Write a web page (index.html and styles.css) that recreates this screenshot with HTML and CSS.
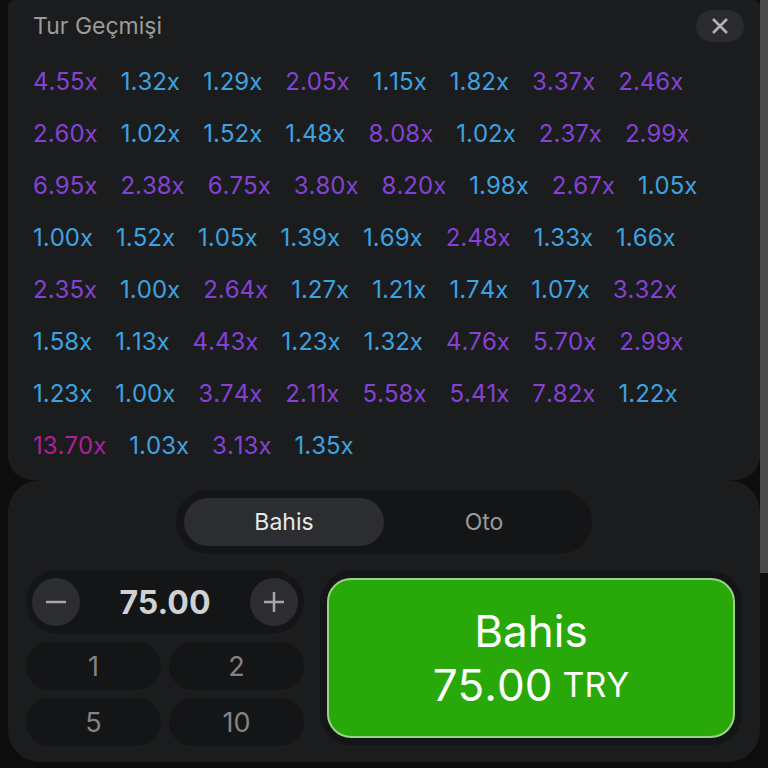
FILE: index.html
```
<!DOCTYPE html>
<html lang="tr">
<head>
    <meta charset="UTF-8">
    <meta name="viewport" content="width=device-width, initial-scale=1.0">
    <title>Tur Geçmişi</title>
    <link rel="stylesheet" href="styles.css">
</head>
<body>
    <main class="content">
        <section class="history">
            <header class="history-header">
                <h1>Tur Geçmişi</h1>
                <button class="close" type="button" aria-label="Kapat">
                    <svg width="18" height="18" viewBox="0 0 18 18"><path d="M2 2L16 16M16 2L2 16"/></svg>
                </button>
            </header>
            <ul class="rounds">
                <li class="mid">4.55x</li>
                <li>1.32x</li>
                <li>1.29x</li>
                <li class="mid">2.05x</li>
                <li>1.15x</li>
                <li>1.82x</li>
                <li class="mid">3.37x</li>
                <li class="mid">2.46x</li>
                <li class="mid">2.60x</li>
                <li>1.02x</li>
                <li>1.52x</li>
                <li>1.48x</li>
                <li class="mid">8.08x</li>
                <li>1.02x</li>
                <li class="mid">2.37x</li>
                <li class="mid">2.99x</li>
                <li class="mid">6.95x</li>
                <li class="mid">2.38x</li>
                <li class="mid">6.75x</li>
                <li class="mid">3.80x</li>
                <li class="mid">8.20x</li>
                <li>1.98x</li>
                <li class="mid">2.67x</li>
                <li>1.05x</li>
                <li>1.00x</li>
                <li>1.52x</li>
                <li>1.05x</li>
                <li>1.39x</li>
                <li>1.69x</li>
                <li class="mid">2.48x</li>
                <li>1.33x</li>
                <li>1.66x</li>
                <li class="mid">2.35x</li>
                <li>1.00x</li>
                <li class="mid">2.64x</li>
                <li>1.27x</li>
                <li>1.21x</li>
                <li>1.74x</li>
                <li>1.07x</li>
                <li class="mid">3.32x</li>
                <li>1.58x</li>
                <li>1.13x</li>
                <li class="mid">4.43x</li>
                <li>1.23x</li>
                <li>1.32x</li>
                <li class="mid">4.76x</li>
                <li class="mid">5.70x</li>
                <li class="mid">2.99x</li>
                <li>1.23x</li>
                <li>1.00x</li>
                <li class="mid">3.74x</li>
                <li class="mid">2.11x</li>
                <li class="mid">5.58x</li>
                <li class="mid">5.41x</li>
                <li class="mid">7.82x</li>
                <li>1.22x</li>
                <li class="high">13.70x</li>
                <li>1.03x</li>
                <li class="mid">3.13x</li>
                <li>1.35x</li>
            </ul>
        </section>

        <section class="bet">
            <div class="tabs">
                <button class="tab active" type="button">Bahis</button>
                <button class="tab" type="button">Oto</button>
            </div>
            <div class="controls">
                <div class="amounts">
                    <div class="stepper">
                        <button class="step" type="button" aria-label="Azalt">
                            <svg width="20" height="20" viewBox="0 0 20 20"><path d="M0 10H20"/></svg>
                        </button>
                        <input class="amount" type="text" value="75.00" aria-label="Bahis tutarı">
                        <button class="step" type="button" aria-label="Artır">
                            <svg width="20" height="20" viewBox="0 0 20 20"><path d="M0 10H20M10 0V20"/></svg>
                        </button>
                    </div>
                    <div class="presets">
                        <button type="button">1</button>
                        <button type="button">2</button>
                        <button type="button">5</button>
                        <button type="button">10</button>
                    </div>
                </div>
                <button class="place-bet" type="button">
                    <span>Bahis</span>
                    <span class="total">75.00 <small>TRY</small></span>
                </button>
            </div>
        </section>
    </main>
    <div class="scroll-track"><div class="scroll-thumb"></div></div>
</body>
</html>
```

FILE: styles.css
```
* {
    box-sizing: border-box;
}

body {
    margin: 0;
    min-height: 100vh;
    display: flex;
    background: #0d0d0e;
    color: #9b9b9b;
    font-family: Inter, sans-serif;
    font-size: 24px;
}

button {
    display: flex;
    align-items: center;
    justify-content: center;
    padding: 0;
    border: none;
    color: inherit;
    font: inherit;
    cursor: pointer;
}

svg {
    fill: none;
    stroke: #b4b4b5;
    stroke-width: 2.5;
}

.content {
    flex: 1;
    min-width: 0;
    padding-left: 8px;
}

/* round history */
.history {
    padding: 8px 16px 8px 25px;
    background: #1b1c1d;
    border-radius: 6px 6px 24px 24px;
}

.history-header {
    display: flex;
    align-items: center;
    justify-content: space-between;
    height: 36px;
}

.history-header h1 {
    margin: 0;
    font-size: 23px;
    font-weight: 400;
}

.close {
    width: 48px;
    height: 32px;
    border-radius: 16px;
    background: #2a2b2e;
}

.rounds {
    display: flex;
    flex-wrap: wrap;
    column-gap: 23px;
    margin: 12px 0 0;
    padding: 0;
    list-style: none;
    line-height: 52px;
    font-kerning: none;
    color: #3da2e0;
}

.rounds .mid {
    color: #8541d3;
}

.rounds .high {
    color: #b01e9c;
}

/* bet panel */
.bet {
    padding: 10px 18px 16px;
    background: #1b1c1d;
    border-radius: 32px;
}

.tabs {
    display: flex;
    width: 416px;
    max-width: 100%;
    margin: 0 auto 16px;
    padding: 8px;
    border-radius: 32px;
    background: #141516;
}

.tab {
    flex: 1;
    height: 48px;
    border-radius: 24px;
    background: none;
    font-size: 23px;
}

.tab.active {
    background: #2c2d30;
    color: #e8e8e8;
}

.controls {
    display: flex;
    gap: 16px;
}

.amounts {
    flex: 0 1 278px;
    min-width: 0;
}

.stepper {
    display: flex;
    align-items: center;
    height: 64px;
    padding: 0 6px;
    border-radius: 32px;
    background: #141516;
}

.step {
    flex: none;
    width: 48px;
    height: 48px;
    border-radius: 50%;
    background: #2c2d30;
}

.step svg {
    stroke: #a6a6a7;
}

.amount {
    flex: 1;
    min-width: 0;
    padding: 0;
    border: none;
    background: none;
    color: #d0d1d2;
    font: inherit;
    font-size: 32px;
    font-weight: 700;
    text-align: center;
}

.presets {
    display: grid;
    grid-template-columns: 1fr 1fr;
    gap: 8px;
    margin-top: 8px;
}

.presets button {
    height: 48px;
    border-radius: 24px;
    background: #141516;
    color: #838384;
    font-size: 27px;
}

.place-bet {
    flex: 1;
    flex-direction: column;
    margin: 8px 7px;
    border: 2px solid #9bd489;
    border-radius: 24px;
    background: #28a909;
    box-shadow: 0 0 0 7px #141516;
    color: #fff;
    font-size: 44px;
    line-height: 54px;
}

.total {
    display: flex;
    align-items: center;
    gap: 10px;
    font-kerning: none;
}

.place-bet small {
    font-size: 34px;
}

/* scrollbar strip */
.scroll-track {
    width: 8px;
}

.scroll-thumb {
    height: 573px;
    background: #494949;
}
```
